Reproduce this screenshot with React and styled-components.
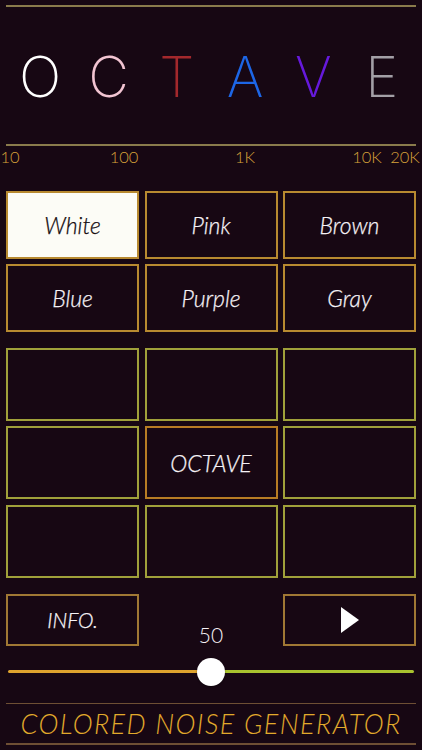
import React from "react";
import styled, { createGlobalStyle } from "styled-components";

const Global = createGlobalStyle`
  html, body { margin: 0; padding: 0; background: #170713; }
  body { font-family: Lato, "Open Sans", sans-serif; }
  * { box-sizing: border-box; }
`;

const Page = styled.div`
  width: 422px;
  height: 750px;
  padding: 5px 6px 0;
  background: #170713;
  display: flex;
  flex-direction: column;
  overflow: hidden;
`;

const Rule = styled.div`
  height: ${(p) => p.$h || 2}px;
  background: ${(p) => p.$c || "#8a7b4c"};
  margin-top: ${(p) => p.$mt || 0}px;
  flex: none;
`;

const Title = styled.div`
  height: 137px;
  display: grid;
  grid-template-columns: repeat(6, 1fr);
  align-items: center;
`;

const Letter = styled.span`
  text-align: center;
  font-family: Inter, Lato, sans-serif;
  font-weight: 200;
  font-size: 56px;
  line-height: 1;
  color: ${(p) => p.$c};
  padding-top: 2px;
`;

const Scale = styled.div`
  position: relative;
  height: 20px;
  margin: 0 -6px;
`;

const Tick = styled.span`
  position: absolute;
  top: 1px;
  left: ${(p) => p.$x}px;
  transform: translateX(-50%);
  font-family: Lato, sans-serif;
  font-weight: 300;
  font-size: 16.5px;
  color: #d8a23a;
  white-space: nowrap;
`;

const Grid = styled.div`
  display: grid;
  grid-template-columns: repeat(3, 1fr);
  grid-auto-rows: ${(p) => p.$row}px;
  column-gap: 5.5px;
  row-gap: ${(p) => p.$gap}px;
  margin-top: ${(p) => p.$mt}px;
`;

const Cell = styled.div`
  border: 2px solid ${(p) => p.$border};
  background: ${(p) => (p.$active ? "#fcfcf6" : "transparent")};
  color: ${(p) => (p.$active ? "#140c10" : "#f6f2f6")};
  display: flex;
  align-items: center;
  justify-content: center;
  font-family: Lato, sans-serif;
  font-style: italic;
  font-weight: 300;
  font-size: ${(p) => p.$fs || 23}px;
  -webkit-text-stroke: 0.25px currentColor;
`;

const Controls = styled.div`
  display: grid;
  grid-template-columns: repeat(3, 1fr);
  column-gap: 5.5px;
  height: 52px;
  margin-top: 16px;
`;

const Value = styled.div`
  align-self: end;
  text-align: center;
  font-family: Lato, sans-serif;
  font-weight: 300;
  font-size: 21px;
  color: #f6f2f6;
  margin-bottom: -1px;
`;

const Slider = styled.div`
  position: relative;
  height: 28px;
  margin: 12px 2px 0;
  display: flex;
  align-items: center;
`;

const Track = styled.div`
  height: 3px;
  border-radius: 2px;
  background: ${(p) => p.$c};
  flex: ${(p) => p.$f};
`;

const Thumb = styled.div`
  position: absolute;
  top: 0;
  width: 28px;
  height: 28px;
  border-radius: 50%;
  background: #ffffff;
  transform: translateX(-50%);
  box-shadow: 0 1px 2px rgba(0, 0, 0, 0.4);
`;

const Footer = styled.div`
  height: 39px;
  display: flex;
  align-items: center;
  justify-content: center;
  font-family: Lato, sans-serif;
  font-style: italic;
  font-weight: 300;
  font-size: 27px;
  letter-spacing: 1.4px;
  color: #e2aa2c;
  white-space: nowrap;
`;

const letters = [
  ["O", "#ffffff"],
  ["C", "#f2c4d2"],
  ["T", "#a3282c"],
  ["A", "#1d66e6"],
  ["V", "#6619dc"],
  ["E", "#a39fa6"],
];

const ticks = [
  { t: "10", x: 10 },
  { t: "100", x: 124 },
  { t: "1K", x: 245 },
  { t: "10K", x: 367 },
  { t: "20K", x: 405 },
];

const colors = ["White", "Pink", "Brown", "Blue", "Purple", "Gray"];

export default function App() {
  const value = 50;
  const pct = 0.5;
  return (
    <>
      <Global />
      <Page>
        <Rule />
        <Title>
          {letters.map(([l, c]) => (
            <Letter key={l} $c={c}>
              {l}
            </Letter>
          ))}
        </Title>
        <Rule />
        <Scale>
          {ticks.map((k) => (
            <Tick key={k.t} $x={k.x}>
              {k.t}
            </Tick>
          ))}
        </Scale>
        <Grid $row={67.5} $gap={5.5} $mt={25}>
          {colors.map((c, i) => (
            <Cell key={c} $border="#b88a30" $active={i === 0}>
              {c}
            </Cell>
          ))}
        </Grid>
        <Grid $row={73} $gap={5.5} $mt={16}>
          {Array.from({ length: 9 }).map((_, i) => (
            <Cell key={i} $border={i === 4 ? "#b87c24" : "#a0a03a"}>
              {i === 4 ? "OCTAVE" : ""}
            </Cell>
          ))}
        </Grid>
        <Controls>
          <Cell $border="#a07834" $fs={21}>
            INFO.
          </Cell>
          <Value>{value}</Value>
          <Cell $border="#a07834">
            <svg width="18" height="26" viewBox="0 0 18 26">
              <path d="M0 0 L18 13 L0 26 Z" fill="#ffffff" />
            </svg>
          </Cell>
        </Controls>
        <Slider>
          <Track $c="#dea32e" $f={pct} />
          <Track $c="#a9c22f" $f={1 - pct} />
          <Thumb style={{ left: `${pct * 100}%` }} />
        </Slider>
        <Rule $h={1.5} $c="#6e4f34" $mt={17} />
        <Footer>COLORED NOISE GENERATOR</Footer>
        <Rule $h={1.5} $c="#6e4f34" />
      </Page>
    </>
  );
}
